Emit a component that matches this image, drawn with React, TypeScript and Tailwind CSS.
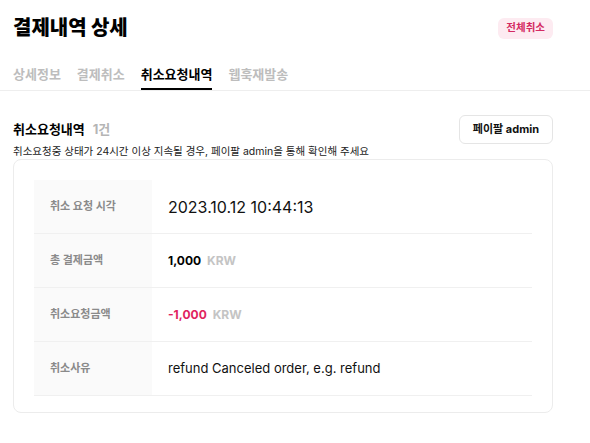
import React from "react";

const tabs = ["상세정보", "결제취소", "취소요청내역", "웹훅재발송"];

const Amount = ({ value, negative }: { value: string; negative?: boolean }) => (
  <div className="flex items-baseline gap-[6px] text-[12px] font-bold">
    <span className={negative ? "text-[#e0245e]" : "text-black"}>{value}</span>
    <span className="text-[#c4c4c4]">KRW</span>
  </div>
);

const rows: { label: string; value: React.ReactNode }[] = [
  {
    label: "취소 요청 시각",
    value: <span className="text-[16px] text-[#111]">2023.10.12 10:44:13</span>,
  },
  { label: "총 결제금액", value: <Amount value="1,000" /> },
  { label: "취소요청금액", value: <Amount value="-1,000" negative /> },
  {
    label: "취소사유",
    value: <span className="text-[13px] text-[#111]">refund Canceled order, e.g. refund</span>,
  },
];

export default function App() {
  const active = "취소요청내역";

  return (
    <div
      className="w-[590px] h-[443px] bg-white overflow-hidden"
      style={{ fontFamily: 'Inter, "Noto Sans CJK KR", sans-serif' }}
    >
      {/* Header */}
      <div className="flex h-[24px] items-center justify-between pl-[13px] pr-[37px] mt-[16px]">
        <h1 className="text-[20px] font-extrabold leading-[24px] text-black">결제내역 상세</h1>
        <button className="h-[21px] px-[8px] rounded-[6px] bg-[#fdebf1] text-[10.5px] font-bold text-[#d42a62]">
          전체취소
        </button>
      </div>

      {/* Tabs */}
      <div className="mt-[25px] flex gap-[16px] px-[13px] border-b border-[#eeeeee]">
        {tabs.map((t) => (
          <div
            key={t}
            className={`pb-[5px] text-[13px] font-bold leading-[18px] border-b-2 ${
              t === active ? "text-black border-black" : "text-[#bdbdbd] border-transparent"
            }`}
          >
            {t}
          </div>
        ))}
      </div>

      {/* Section */}
      <div className="pl-[13px] pr-[37px] pt-[24px]">
        <div className="flex h-[29px] items-center justify-between">
          <div className="flex items-baseline gap-[8px] text-[13px] font-bold">
            <span className="text-black">취소요청내역</span>
            <span className="text-[#b5b5b5]">1건</span>
          </div>
          <button className="h-[29px] px-[13px] rounded-[6px] border border-[#e5e5e5] text-[11px] font-bold text-[#111]">
            페이팔 admin
          </button>
        </div>
        <p className="mt-[1px] text-[10.5px] leading-[14px] text-[#222]">
          취소요청중 상태가 24시간 이상 지속될 경우, 페이팔 admin을 통해 확인해 주세요
        </p>

        <div className="rounded-[8px] border border-[#ececec] px-[20px] pt-[20px] pb-[16px]">
          {rows.map((r) => (
            <div key={r.label} className="flex h-[54px] border-b border-[#f0f0f0]">
              <div className="w-[118px] shrink-0 bg-[#fafafa] flex items-center pl-[16px] text-[11px] font-bold text-[#8a8a8a]">
                {r.label}
              </div>
              <div className="flex items-center pl-[16px]">{r.value}</div>
            </div>
          ))}
        </div>
      </div>
    </div>
  );
}
